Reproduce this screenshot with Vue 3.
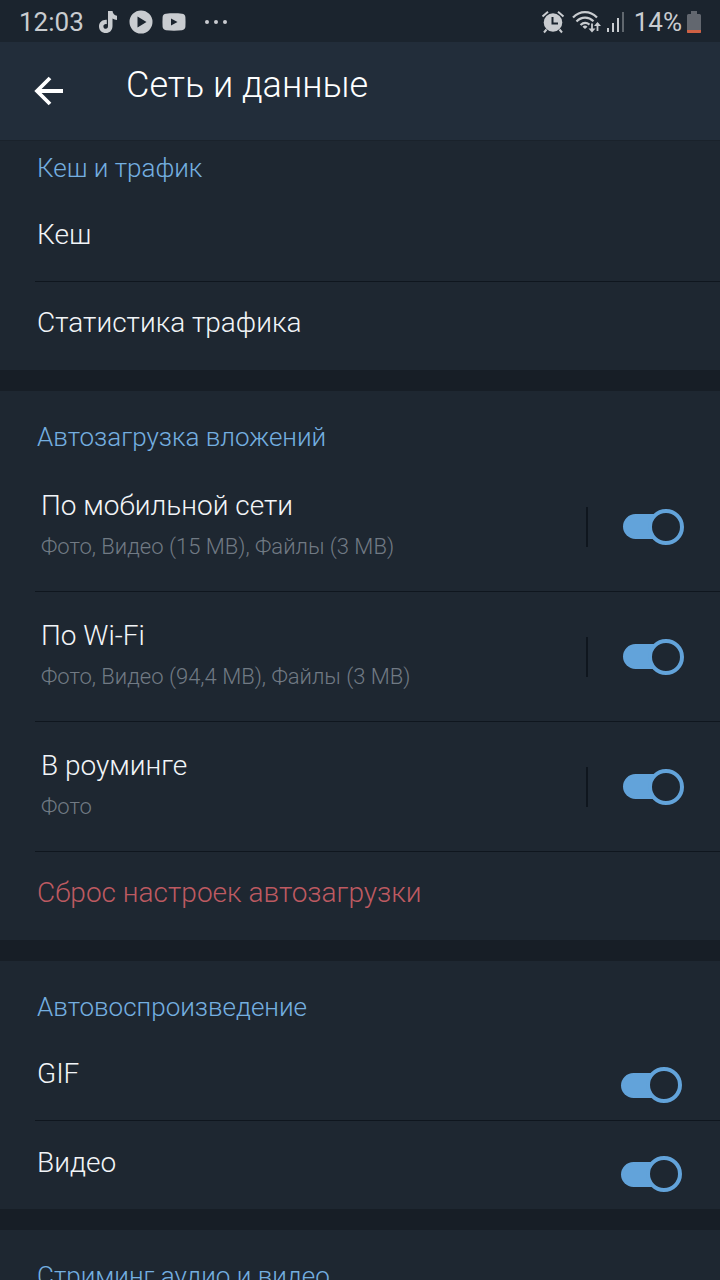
<script setup>
import { reactive } from 'vue'

const traffic = ['Кеш', 'Статистика трафика']

const downloads = reactive([
  { id: 'mobile', title: 'По мобильной сети', detail: 'Фото, Видео (15 MB), Файлы (3 MB)', on: true },
  { id: 'wifi', title: 'По Wi-Fi', detail: 'Фото, Видео (94,4 MB), Файлы (3 MB)', on: true },
  { id: 'roaming', title: 'В роуминге', detail: 'Фото', on: true },
])

const autoplay = reactive([
  { id: 'gif', title: 'GIF', on: true },
  { id: 'video', title: 'Видео', on: true },
])
</script>

<template>
  <div class="screen">
    <div class="status">
      <span class="clock">12:03</span>
      <svg class="tiktok" width="20" height="24" viewBox="0 0 20 24" aria-hidden="true">
        <path d="M10 1h4.500c.3 2.700 1.900 4.400 4.500 4.700v4.300c-1.700 0-3.200-.5-4.500-1.400v7.300c0 4.200-3 7.100-6.700 7.100C4 23 1 20.200 1 16.400c0-4.100 3.400-7 7.800-6.600v4.400c-2-.4-3.400.6-3.400 2.200 0 1.500 1.100 2.300 2.400 2.300 1.400 0 2.200-1.100 2.200-2.800z" fill="currentColor" />
      </svg>
      <svg class="play" width="24" height="24" viewBox="0 0 24 24" aria-hidden="true">
        <path fill-rule="evenodd" d="M12 .5a11.500 11.500 0 1 0 0 23a11.500 11.500 0 0 0 0-23zM8.500 6.500v11l9-5.500z" fill="currentColor" />
      </svg>
      <svg class="tube" width="24" height="18" viewBox="0 0 24 18" aria-hidden="true">
        <path fill-rule="evenodd" d="M4 .8C9 .2 15 .2 20 .8c2 .2 3.300 1.500 3.400 3.400.2 3.200.2 6.400 0 9.600-.1 1.900-1.400 3.200-3.400 3.400-5 .6-11 .6-16 0-2-.2-3.300-1.500-3.400-3.400-.2-3.200-.2-6.400 0-9.600C.7 2.300 2 1 4 .8zM9 5.500v7L15.500 9z" fill="currentColor" />
      </svg>
      <svg class="more" width="24" height="4" viewBox="0 0 24 4" aria-hidden="true">
        <g fill="currentColor"><circle cx="3" cy="2" r="2" /><circle cx="12" cy="2" r="2" /><circle cx="21" cy="2" r="2" /></g>
      </svg>
      <span class="spacer"></span>
      <svg class="alarm" width="24" height="24" viewBox="0 0 24 24" aria-hidden="true">
        <path d="M1.500 6.500L7 1.800M22.500 6.500L17 1.800M5.500 19.500L3 22.500M18.500 19.500l2.500 3" stroke="currentColor" stroke-width="2" fill="none" />
        <circle cx="12" cy="12.500" r="9.300" fill="currentColor" />
        <path d="M11.500 7v6.500H17" stroke="#1b242e" stroke-width="2" fill="none" />
      </svg>
      <svg class="wifi" width="30" height="24" viewBox="0 0 30 24" aria-hidden="true">
        <g stroke="currentColor" stroke-width="2.200" fill="none">
          <path d="M1 7.500C8 .3 18 .3 25 7.500M4.500 11.500c5-5 12-5 17-.3M8.500 15c3-2.800 6-2.800 9-.4" />
          <path d="M20 13.500V21M25.500 21v-7.500" stroke-width="1.800" />
        </g>
        <path d="M10.500 16.700L13 19l2.500-2.300c-1.500-1.500-3.500-1.500-5 0zM16.500 18.500h7L20 22.500zM22 16h7l-3.500-4z" fill="currentColor" />
      </svg>
      <svg class="signal" width="20" height="22" viewBox="0 0 20 22" aria-hidden="true">
        <g fill="currentColor"><path d="M1 17h2v4H1zM6 12h2v9H6zM11 7h2v14h-2z" /><path d="M16 1h2v20h-2z" opacity=".4" /></g>
      </svg>
      <span class="percent">14%</span>
      <svg class="battery" width="14" height="24" viewBox="0 0 14 24" aria-hidden="true">
        <path d="M4 1h6v3h2.500Q14 4 14 5.500V22q0 1-1 1H1q-1 0-1-1V5.500Q0 4 1.500 4H4z" fill="#62676f" />
        <path d="M0 20h14v2q0 1-1 1H1q-1 0-1-1z" fill="#cf6144" />
      </svg>
    </div>

    <header class="bar">
      <button class="back" type="button" aria-label="Назад">
        <svg width="30" height="30" viewBox="0 0 30 30" aria-hidden="true">
          <path d="M29 15H4M16 2L3 15l13 13" fill="none" stroke="currentColor" stroke-width="3.800" />
        </svg>
      </button>
      <h1>Сеть и данные</h1>
    </header>

    <main>
      <section class="first">
        <h2>Кеш и трафик</h2>
        <button v-for="item in traffic" :key="item" class="row" type="button">
          <span class="line"><span class="label">{{ item }}</span></span>
        </button>
      </section>

      <section>
        <h2>Автозагрузка вложений</h2>
        <div v-for="item in downloads" :key="item.id" class="row tall">
          <div class="line">
            <label class="texts" :for="item.id">
              <span class="label">{{ item.title }}</span>
              <span class="detail">{{ item.detail }}</span>
            </label>
            <span class="rule"></span>
            <input :id="item.id" v-model="item.on" class="switch" type="checkbox" role="switch">
          </div>
        </div>
        <button class="row danger" type="button">
          <span class="line"><span class="label">Сброс настроек автозагрузки</span></span>
        </button>
      </section>

      <section>
        <h2>Автовоспроизведение</h2>
        <div v-for="item in autoplay" :key="item.id" class="row toggle">
          <div class="line">
            <label class="label" :for="item.id">{{ item.title }}</label>
            <input :id="item.id" v-model="item.on" class="switch" type="checkbox" role="switch">
          </div>
        </div>
      </section>

      <section>
        <h2>Стриминг аудио и видео</h2>
      </section>
    </main>
  </div>
</template>

<style>
body {
  background: #1e2731;
}
</style>

<style scoped>
.screen {
  height: 100vh;
  overflow: hidden;
  display: flex;
  flex-direction: column;
  background: #171e26;
  color: #f2f5f8;
  font-family: Roboto, "Noto Sans", sans-serif;
  font-weight: 300;
}

.status {
  flex: none;
  height: 42px;
  box-sizing: border-box;
  padding: 2px 19px 0 19px;
  display: flex;
  align-items: center;
  background: #1b242e;
  color: #c9ccd0;
  font-size: 26px;
  font-weight: 400;
}

.status svg { flex: none; }
.spacer { flex: 1; }
.tiktok { margin-left: 14px; }
.play { margin-left: 11px; }
.tube { margin-left: 9px; }
.more { margin-left: 18px; }
.wifi { margin-left: 7px; }
.signal { margin-left: 4px; }
.percent { margin-left: 8px; }
.battery { margin-left: 5px; }

.bar {
  flex: none;
  height: 98px;
  padding: 0 34px;
  display: flex;
  align-items: center;
  gap: 62px;
  background: #222d3a;
  border-bottom: 1px solid #1a222b;
}

.back {
  display: flex;
  padding: 0;
  border: 0;
  background: none;
  color: #fff;
}

h1 {
  margin: 0;
  padding-bottom: 12px;
  color: #fff;
  font-size: 36px;
  line-height: 40px;
  font-weight: 300;
}

main {
  flex: 1;
  min-height: 0;
  overflow: hidden;
}

section {
  margin-bottom: 21px;
  background: #1e2731;
}

h2 {
  margin: 0;
  padding: 30px 37px 9px;
  color: #74afe0;
  font-size: 26px;
  line-height: 32px;
  font-weight: 300;
}

.first h2 {
  padding-top: 11px;
  padding-bottom: 10px;
}

.row {
  display: block;
  width: 100%;
  box-sizing: border-box;
  padding: 0 0 0 35px;
  border: 0;
  background: none;
  color: inherit;
  font: inherit;
  text-align: left;
}

.line {
  display: flex;
  min-height: 88px;
  box-sizing: border-box;
  padding: 24px 38px 0 2px;
  border-bottom: 1px solid #0f161e;
}

.label {
  flex: 1;
  font-size: 28px;
  line-height: 34px;
}

.danger { color: #bd5a61; }

.tall .line {
  min-height: 130px;
  align-items: center;
  padding: 0 36px 0 6px;
}

.texts {
  flex: 1;
  display: flex;
  flex-direction: column;
  gap: 10px;
  padding-bottom: 4px;
}

.texts .label { flex: none; }

.detail {
  color: #717a84;
  font-size: 22px;
  line-height: 28px;
}

.rule {
  width: 2px;
  height: 40px;
  margin-right: 35px;
  background: #0f161e;
}

.toggle .line {
  min-height: 89px;
  padding-top: 25px;
}

.toggle .switch { margin-top: 10px; }

.row:last-child .line {
  min-height: 88px;
  border-bottom: 0;
}

.switch {
  appearance: none;
  flex: none;
  display: grid;
  align-items: center;
  width: 61px;
  height: 36px;
  margin: 0;
}

.switch::before,
.switch::after {
  content: "";
  grid-area: 1 / 1;
  box-sizing: border-box;
  background: #62a3da;
}

.switch::before {
  width: 46px;
  height: 25px;
  border-radius: 13px;
}

.switch::after {
  justify-self: end;
  width: 36px;
  height: 36px;
  border: 4px solid #62a3da;
  border-radius: 50%;
  background: #1e2731;
}

.switch:not(:checked)::before { justify-self: end; background: #4a5561; }
.switch:not(:checked)::after { justify-self: start; border-color: #4a5561; }
</style>
